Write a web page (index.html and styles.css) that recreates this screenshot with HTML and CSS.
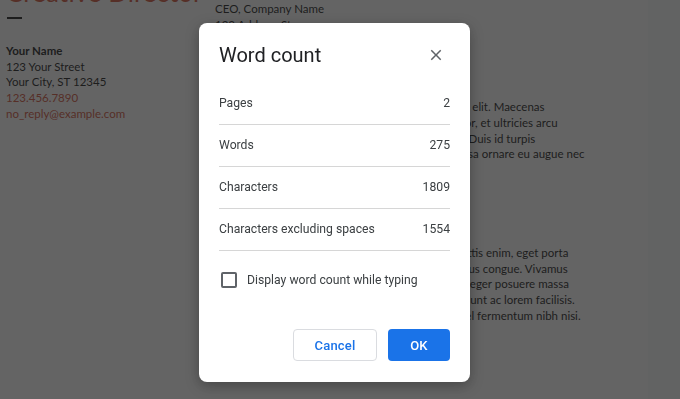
FILE: index.html
```html
<!DOCTYPE html>
<html lang="en">
<head>
<meta charset="utf-8">
<title>Word count</title>
<link rel="stylesheet" href="styles.css">
</head>
<body>
<div class="desk">
  <div class="page">
    <div class="side">
      <h1 class="role">Creative Director</h1>
      <div class="rule"></div>
      <div class="contact">
        <div class="name">Your Name</div>
        <div>123 Your Street</div>
        <div>Your City, ST 12345</div>
        <div class="accent">123.456.7890</div>
        <div class="accent">no_reply@example.com</div>
      </div>
    </div>
    <div class="main">
      <div class="meta">
        <div>CEO, Company Name</div>
        <div>123 Address St</div>
        <div>Anytown, ST 12345</div>
      </div>
      <div class="para first">
        <div class="ln">Lorem ipsum dolor sit amet, consectetur adipiscing elit. Maecenas</div>
        <div class="ln">euismod, sapien vel facilisis feugiat, metus nisl dolor, et ultricies arcu</div>
        <div class="ln">nisl at nunc. Sed congue sapien vel nunc ut lectus. Duis id turpis</div>
        <div class="ln">eget velit congue porta, vel aliquet nunc. Nam massa ornare eu augue nec</div>
      </div>
      <div class="para second">
        <div class="ln">Donec sed ipsum et metus euismod, in tempus mattis enim, eget porta</div>
        <div class="ln">Pellentesque habitant morbi tristique senectus netus congue. Vivamus</div>
        <div class="ln">Maecenas rutrum venenatis pede, dictum nunc. Integer posuere massa</div>
        <div class="ln">Nam dictum, odio nec pretium volutpat, arcu tincidunt ac lorem facilisis.</div>
        <div class="ln">Vestibulum ante ipsum primis in faucibus mauris vel fermentum nibh nisi.</div>
      </div>
    </div>
  </div>
</div>

<div class="scrim">
  <div class="dialog" role="dialog" aria-label="Word count">
    <div class="head">
      <h2 class="heading">Word count</h2>
      <svg class="close" viewBox="0 0 24 24" width="18" height="18" aria-hidden="true"><path d="M19 6.41L17.59 5 12 10.59 6.41 5 5 6.41 10.59 12 5 17.59 6.41 19 12 13.41 17.59 19 19 17.59 13.41 12z" fill="#5f6368"/></svg>
    </div>
    <div class="stats">
      <div class="row"><span>Pages</span><span>2</span></div>
      <div class="row"><span>Words</span><span>275</span></div>
      <div class="row"><span>Characters</span><span>1809</span></div>
      <div class="row"><span>Characters excluding spaces</span><span>1554</span></div>
    </div>
    <label class="check"><span class="box"></span><span>Display word count while typing</span></label>
    <div class="actions">
      <button class="btn cancel">Cancel</button>
      <button class="btn ok">OK</button>
    </div>
  </div>
</div>
</body>
</html>
```
FILE: styles.css
```css
html, body {
  margin: 0;
  width: 680px;
  height: 399px;
  overflow: hidden;
}
body {
  background: #f8f9fa;
  font-family: Lato, "Open Sans", sans-serif;
}
.desk {
  height: 399px;
}
.page {
  width: 648px;
  height: 399px;
  background: #fff;
  box-sizing: border-box;
  padding-left: 6px;
  display: flex;
  font-size: 11.5px;
  line-height: 15.7px;
  color: #000;
}
.side {
  width: 209px;
  flex: none;
}
.role {
  margin: -23px 0 0;
  font-size: 26px;
  line-height: 30px;
  font-weight: 400;
  color: #cc4125;
  white-space: nowrap;
}
.rule {
  width: 15px;
  height: 2px;
  background: #000;
  margin: 10px 0 0 1px;
}
.contact {
  margin-top: 24px;
}
.name {
  font-weight: 700;
}
.accent {
  color: #cc4125;
}
.main {
  flex: 1;
  min-width: 0;
}
.meta {
  margin-top: 1px;
}
.ln {
  white-space: nowrap;
}
.para.first {
  margin-top: 51px;
}
.para.second {
  margin-top: 83px;
}

.scrim {
  position: fixed;
  inset: 0;
  background: rgba(40, 40, 40, 0.72);
  padding: 23px 0 0 199px;
  box-sizing: border-box;
}
.dialog {
  width: 271px;
  height: 359px;
  box-sizing: border-box;
  background: #fff;
  border-radius: 8px;
  box-shadow: 0 4px 14px rgba(0, 0, 0, 0.3);
  padding: 20px;
  display: flex;
  flex-direction: column;
  font-family: Roboto, "Open Sans", Arial, sans-serif;
  color: #3c4043;
}
.head {
  display: flex;
  align-items: center;
  justify-content: space-between;
  height: 24px;
}
.heading {
  margin: 0;
  font-size: 20px;
  line-height: 24px;
  font-weight: 400;
  color: #202124;
}
.close {
  margin-right: 5px;
}
.stats {
  margin-top: 16px;
}
.row {
  display: flex;
  justify-content: space-between;
  font-size: 12.2px;
  line-height: 16px;
  padding: 12px 0 13px;
  border-bottom: 1px solid #d6d6d6;
}
.check {
  display: flex;
  align-items: center;
  margin-top: 21px;
  font-size: 12.2px;
  line-height: 16px;
  color: #3c4043;
}
.box {
  width: 16px;
  height: 16px;
  box-sizing: border-box;
  border: 2px solid #5f6368;
  border-radius: 2px;
  margin: 0 10px 0 2px;
}
.actions {
  margin-top: auto;
  margin-bottom: 1px;
  display: flex;
  justify-content: flex-end;
  gap: 11px;
}
.btn {
  height: 32px;
  border-radius: 4px;
  font-family: Roboto, "Open Sans", Arial, sans-serif;
  font-size: 13px;
  font-weight: 500;
  letter-spacing: 0.2px;
  padding: 0;
  cursor: pointer;
}
.cancel {
  width: 84px;
  background: #fff;
  color: #1a73e8;
  border: 1px solid #dadce0;
}
.ok {
  width: 62px;
  background: #1a73e8;
  color: #fff;
  border: none;
}
```
